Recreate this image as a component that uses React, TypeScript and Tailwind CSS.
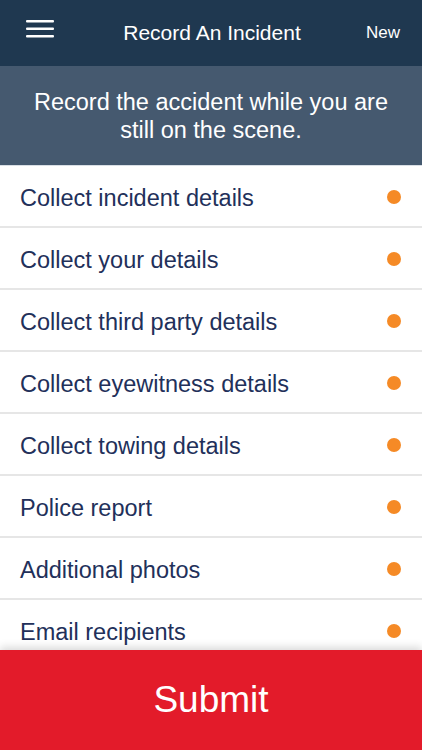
const items = [
  'Collect incident details',
  'Collect your details',
  'Collect third party details',
  'Collect eyewitness details',
  'Collect towing details',
  'Police report',
  'Additional photos',
  'Email recipients',
]

export default function App() {
  return (
    <div className="flex h-[750px] w-[422px] flex-col overflow-hidden bg-white font-['Liberation_Sans',Arial,sans-serif]">
      {/* Top bar */}
      <header className="flex h-[66px] shrink-0 items-center bg-[#1f3850] px-[26px] text-white">
        <svg width="28" height="20" viewBox="0 0 28 20" className="-mt-2 shrink-0">
          <rect x="0" y="1" width="28" height="2.5" rx="1" fill="#fff" />
          <rect x="0" y="8.5" width="28" height="2.5" rx="1" fill="#fff" />
          <rect x="0" y="16" width="28" height="2.5" rx="1" fill="#fff" />
        </svg>
        <h1 className="flex-1 pb-[2px] pl-1 text-center text-[21px] leading-none">Record An Incident</h1>
        <span className="mr-[-4px] pb-[2px] text-[17px] leading-none">New</span>
      </header>

      {/* Info banner */}
      <div className="flex h-[100px] shrink-0 items-center justify-center border-b border-[#d9dfe5] bg-[#45596f] px-8 text-center text-[23.5px] leading-[28px] text-white">
        Record the accident while you are still on the scene.
      </div>

      {/* Checklist */}
      <ul className="min-h-0 flex-1 overflow-hidden">
        {items.map((item) => (
          <li
            key={item}
            className="flex h-[62px] items-center justify-between border-b-2 border-[#e6e6e6] pl-5 pr-[21px] pt-[2px]"
          >
            <span className="pt-[3px] text-[23.5px] text-[#22305a]">{item}</span>
            <span className="h-[14px] w-[14px] rounded-full bg-[#f58a26]" />
          </li>
        ))}
      </ul>

      {/* Submit */}
      <button className="relative h-[100px] shrink-0 bg-[#e31b2a] text-[37px] text-white shadow-[0_-3px_8px_rgba(0,0,0,0.15)]">
        Submit
      </button>
    </div>
  )
}
